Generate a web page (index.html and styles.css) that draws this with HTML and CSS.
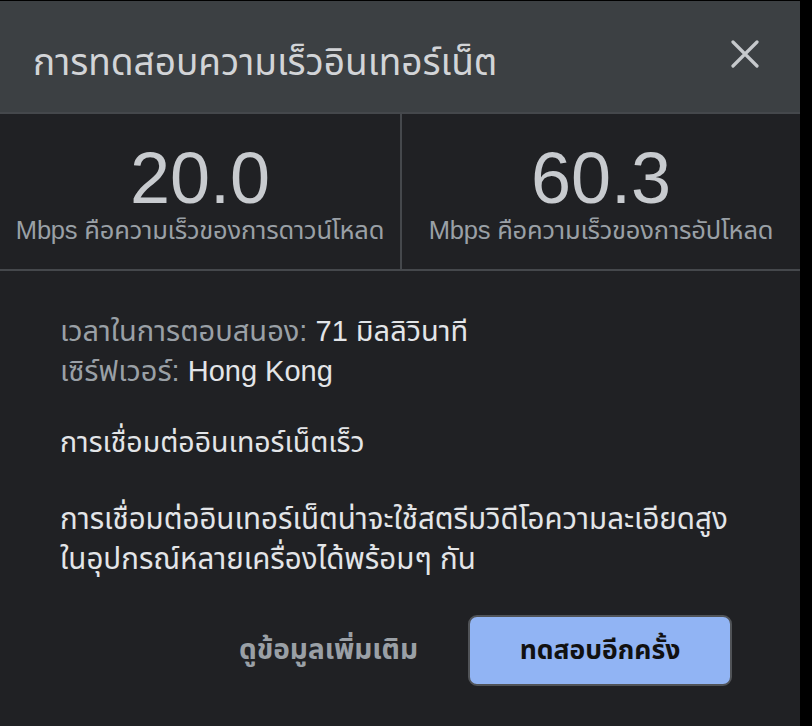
FILE: index.html
```html
<!DOCTYPE html>
<html lang="th">
<head>
<meta charset="utf-8">
<link rel="stylesheet" href="styles.css">
</head>
<body>
<div class="dialog">
  <header class="head">
    <h1 class="title">การทดสอบความเร็วอินเทอร์เน็ต</h1>
    <button class="close" aria-label="ปิด">
      <svg width="28" height="28" viewBox="0 0 28 28"><path d="M2 2 L26 26 M26 2 L2 26" stroke="#c6c9cc" stroke-width="3.2" stroke-linecap="round"/></svg>
    </button>
  </header>
  <section class="stats">
    <div class="stat">
      <div class="num">20.0</div>
      <div class="lbl">Mbps คือความเร็วของการดาวน์โหลด</div>
    </div>
    <div class="stat">
      <div class="num">60.3</div>
      <div class="lbl">Mbps คือความเร็วของการอัปโหลด</div>
    </div>
  </section>
  <section class="body">
    <div class="meta">
      <div><span class="key">เวลาในการตอบสนอง:</span> <span class="val">71 มิลลิวินาที</span></div>
      <div><span class="key">เซิร์ฟเวอร์:</span> <span class="val">Hong Kong</span></div>
    </div>
    <p class="verdict">การเชื่อมต่ออินเทอร์เน็ตเร็ว</p>
    <p class="desc">การเชื่อมต่ออินเทอร์เน็ตน่าจะใช้สตรีมวิดีโอความละเอียดสูง<br>ในอุปกรณ์หลายเครื่องได้พร้อมๆ กัน</p>
    <div class="actions">
      <a class="more">ดูข้อมูลเพิ่มเติม</a>
      <button class="again">ทดสอบอีกครั้ง</button>
    </div>
  </section>
</div>
</body>
</html>
```

FILE: styles.css
```css
* { box-sizing: border-box; }
html, body { margin: 0; padding: 0; background: #000; }
body {
  font-family: "Liberation Sans", "Noto Sans Thai", "Noto Sans", sans-serif;
  width: 812px;
  height: 726px;
  overflow: hidden;
  padding-top: 1px;
}
.dialog {
  width: 800px;
  height: 725px;
  background: #202124;
  display: flex;
  flex-direction: column;
}
.head {
  height: 113px;
  background: #3c4043;
  border-bottom: 2px solid #45484c;
  display: flex;
  align-items: center;
  justify-content: space-between;
  padding: 0 41px 0 33px;
}
.title {
  margin: 0;
  font-size: 37px;
  line-height: 50px;
  font-weight: 400;
  color: #d2d4d7;
  padding-top: 12px;
}
.close {
  background: none;
  border: 0;
  padding: 0;
  width: 28px;
  height: 28px;
  margin-top: -6px;
}
.close svg { display: block; }
.stats {
  display: grid;
  grid-template-columns: 1fr 1fr;
  height: 157px;
  border-bottom: 2px solid #45484c;
}
.stat {
  display: flex;
  flex-direction: column;
  align-items: center;
  padding-top: 26px;
}
.stat + .stat { border-left: 2px solid #45484c; }
.num {
  font-size: 72px;
  line-height: 76px;
  color: #c8cbcf;
}
.lbl {
  font-size: 25.5px;
  line-height: 28px;
  color: #9aa0a6;
  letter-spacing: -0.2px;
  white-space: nowrap;
}
.body {
  padding: 40px 60px 0 60px;
  display: flex;
  flex-direction: column;
}
.meta {
  font-size: 29px;
  line-height: 40px;
}
.key { color: #9aa0a6; }
.val { color: #e3e5e8; }
.verdict {
  margin: 31px 0 0;
  font-size: 28.5px;
  line-height: 40px;
  color: #e3e5e8;
}
.desc {
  margin: 37px 0 0;
  font-size: 29.5px;
  line-height: 40px;
  color: #e3e5e8;
  white-space: nowrap;
}
.actions {
  display: flex;
  justify-content: flex-end;
  align-items: center;
  margin-top: 36px;
  margin-right: 8px;
  gap: 50px;
}
.more {
  font-size: 28px;
  color: #9aa0a6;
  font-weight: 700;
}
.again {
  width: 264px;
  height: 71px;
  background: #91b4f4;
  border: 2px solid #505357;
  border-radius: 9px;
  font-family: inherit;
  font-size: 26.5px;
  font-weight: 700;
  color: #111;
}
```
